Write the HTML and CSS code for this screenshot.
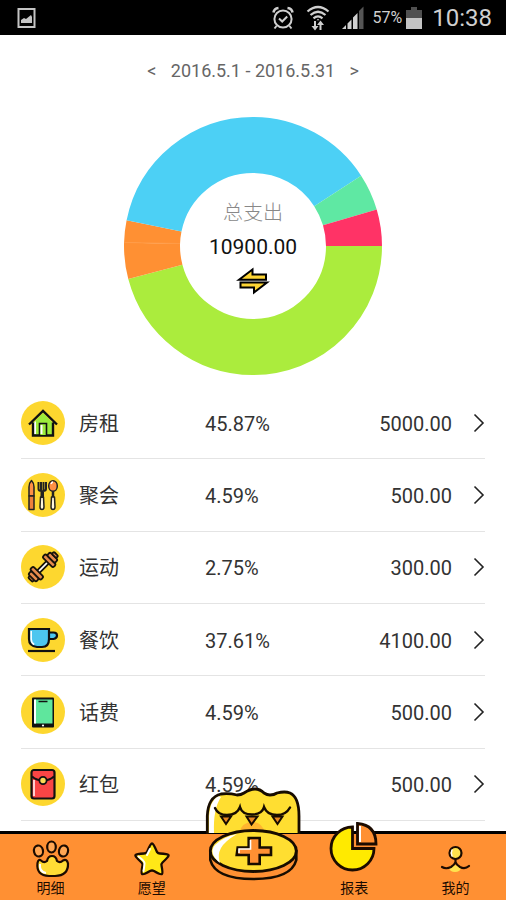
FILE: index.html
```html
<!DOCTYPE html>
<html lang="zh-CN">
<head>
<meta charset="utf-8">
<meta name="viewport" content="width=device-width, initial-scale=1">
<title>报表</title>
<link rel="stylesheet" href="styles.css">
</head>
<body>
<div class="app">
  <header class="status">
    <svg class="status-photo" width="20" height="22" viewBox="0 0 20 22" aria-hidden="true"><path d="M1.5 2h16v18h-16z" fill="none" stroke="#c4c4c4" stroke-width="2"/><path d="M4 16v-3l3-2 2 1 5-4 1 2v6z" fill="#c4c4c4"/></svg>
    <div class="status-right">
      <svg width="22" height="24" viewBox="0 0 22 24" fill="none" stroke="#cfcfcf" aria-hidden="true"><circle cx="11" cy="13" r="8.6" stroke-width="2"/><path d="M7 12.5l3.2 3 5-5" stroke-width="2"/><path d="M1.5 6.5Q2 2.5 6.5 2M20.500 6.500Q20 2.500 15.500 2" stroke-width="2.600"/><path d="M4.500 20l-2 2.500M17.500 20l2 2.500" stroke-width="2"/></svg>
      <svg class="status-wifi" width="24" height="26" viewBox="0 0 24 26" fill="none" stroke="#cfcfcf" aria-hidden="true"><path d="M1.500 6.500Q12-2.500 22.500 6.500M4.500 10Q12 3.500 19.500 10M7.500 13.300Q12 9.500 16.500 13.300" stroke-width="2.200"/><path d="M9 16v7M14.500 25v-7" stroke-width="2"/><path d="M5.500 21h7L9 25.500zM11 20h7l-3.500-4.500zM10.500 15.200l1.500-1.500 1.500 1.500z" fill="#cfcfcf" stroke="none"/></svg>
      <svg class="status-signal" width="24" height="24" viewBox="0 0 24 24" aria-hidden="true"><path d="M1 23l4-4v4zM6.500 17.500l4-4V23h-4zM12 11.500l4.500-4.500v16H12z" fill="#d0d0d0"/><path d="M18 5l4.500-4.500V23H18z" fill="#555"/></svg>
      <span class="battery-text">57%</span>
      <svg width="16" height="24" viewBox="0 0 16 24" aria-hidden="true"><path d="M0 4h5V1h6v3h5v9H0z" fill="#505050"/><path d="M0 12h16v11H0z" fill="#c4c4c4"/></svg>
      <time class="clock">10:38</time>
    </div>
  </header>

  <main class="report">
    <div class="period">
      <button type="button" class="period-step" aria-label="上个月">&lt;</button>
      <span>2016.5.1 - 2016.5.31</span>
      <button type="button" class="period-step" aria-label="下个月">&gt;</button>
    </div>

    <section class="chart">
      <svg class="donut" viewBox="0 0 258 258" fill="none" stroke-width="56" aria-hidden="true">
        <circle cx="129" cy="129" r="101" pathLength="10000" stroke="#abec3d" stroke-dasharray="4587 5413"/>
        <circle cx="129" cy="129" r="101" pathLength="10000" stroke="#ff9033" stroke-dasharray="459 9541" stroke-dashoffset="-4587"/>
        <circle cx="129" cy="129" r="101" pathLength="10000" stroke="#ff9033" stroke-dasharray="275 9725" stroke-dashoffset="-5046"/>
        <circle cx="129" cy="129" r="101" pathLength="10000" stroke="#4cd0f5" stroke-dasharray="3761 6239" stroke-dashoffset="-5321"/>
        <circle cx="129" cy="129" r="101" pathLength="10000" stroke="#5fe8a3" stroke-dasharray="459 9541" stroke-dashoffset="-9082"/>
        <circle cx="129" cy="129" r="101" pathLength="10000" stroke="#ff3366" stroke-dasharray="459 9541" stroke-dashoffset="-9541"/>
        <path d="M0 125.500l56 1" stroke="#ff9b46" stroke-width="1"/>
      </svg>
      <div class="summary">
        <span class="summary-label">总支出</span>
        <strong class="summary-total">10900.00</strong>
        <button type="button" class="swap" aria-label="切换收支">
          <svg width="34" height="24" viewBox="0 2 34 24" overflow="visible" fill="#fdd535" stroke="#000" stroke-width="2" aria-hidden="true"><path d="M3 12.800L16.500 2.500v5h13.500v5.300zM31 15.500H4.500v5H18v5z"/></svg>
        </button>
      </div>
    </section>

    <ul class="list">
      <li><a class="row" href="#rent">
        <svg class="badge" viewBox="0 0 44 44" aria-hidden="true"><circle cx="22" cy="22" r="22" fill="#fdd72f"/><path d="M12 22L22 12l10 10v12.500H12z" fill="#9cec3c"/><path d="M13 22v11h2V20z" fill="#fff"/><path d="M12 21.500v13h20v-13M8 23.500L22 10l14 13.500" fill="none" stroke="#111" stroke-width="2.400"/><path d="M18.500 34V22.500h7V34" fill="#9cec3c" stroke="#111" stroke-width="1.600"/><path d="M19.500 24h2v9h-2z" fill="#fff"/></svg>
        <span>房租</span><span>45.87%</span><span class="amount">5000.00</span>
        <svg class="chevron" viewBox="0 0 12 20" aria-hidden="true"><path d="M1.500 1.500L10 10l-8.500 8.500"/></svg>
      </a></li>
      <li><a class="row" href="#party">
        <svg class="badge" viewBox="0 0 44 44" stroke="#222" stroke-width="1.500" stroke-linejoin="round" aria-hidden="true"><circle cx="22" cy="22" r="22" fill="#fdd72f" stroke="none"/><path d="M8 23V14q0-4 2.500-6.500Q13 10 13 14v9z" fill="#ff9045"/><path d="M8 23h5v13.500H8z" fill="#ee803b"/><path d="M19.500 24h3l.5 10q0 2.500-2 2.500T19 34zM30.500 24h3l.5 10q0 2.500-2 2.500T30 34z" fill="#fff6d9"/><path d="M17.500 9v7q0 2 3 2v6h1.500v-6q3 0 3-2V9M20 9v8M22.500 9v8" fill="none" stroke-width="2"/><path d="M32 18v6" stroke-width="2.500"/><ellipse cx="32" cy="13" rx="4.300" ry="5.300" fill="#ff9045"/><path d="M30 11q1-2 2-2" stroke="#fff" fill="none"/></svg>
        <span>聚会</span><span>4.59%</span><span class="amount">500.00</span>
        <svg class="chevron" viewBox="0 0 12 20" aria-hidden="true"><path d="M1.500 1.500L10 10l-8.500 8.500"/></svg>
      </a></li>
      <li><a class="row" href="#sport">
        <svg class="badge" viewBox="0 0 44 44" aria-hidden="true"><circle cx="22" cy="22" r="22" fill="#fdd72f"/><g transform="rotate(-45 22 22)" stroke="#17130b" stroke-width="1.800" fill="#e88b4d"><path d="M15 20.300h14v3.400H15z" fill="#fff"/><rect x="4" y="19" width="3" height="6" rx="1"/><rect x="6.500" y="16.500" width="4.500" height="11" rx="1.800"/><rect x="11" y="14.500" width="4.500" height="15" rx="1.800"/><rect x="28.500" y="14.500" width="4.500" height="15" rx="1.800"/><rect x="33" y="16.500" width="4.500" height="11" rx="1.800"/><rect x="37.500" y="19" width="3" height="6" rx="1"/></g></svg>
        <span>运动</span><span>2.75%</span><span class="amount">300.00</span>
        <svg class="chevron" viewBox="0 0 12 20" aria-hidden="true"><path d="M1.500 1.500L10 10l-8.500 8.500"/></svg>
      </a></li>
      <li><a class="row" href="#food">
        <svg class="badge" viewBox="0 0 44 44" stroke="#111" stroke-width="2.200" aria-hidden="true"><circle cx="22" cy="22" r="22" fill="#fdd72f" stroke="none"/><path d="M27 14.500h5.500q3.500 0 3.500 3t-3.500 3.500H28" fill="#4cc6ef"/><path d="M8 11h20v10q0 8-7 8h-5q-8-1-8-8z" fill="#4cc6ef"/><path d="M10.200 13v8q0 4 3 5.500" fill="none" stroke="#fff" stroke-width="1.500"/><path d="M7 33h27"/></svg>
        <span>餐饮</span><span>37.61%</span><span class="amount">4100.00</span>
        <svg class="chevron" viewBox="0 0 12 20" aria-hidden="true"><path d="M1.500 1.500L10 10l-8.500 8.500"/></svg>
      </a></li>
      <li><a class="row" href="#phone">
        <svg class="badge" viewBox="0 0 44 44" aria-hidden="true"><circle cx="22" cy="22" r="22" fill="#fdd72f"/><rect x="11" y="7.500" width="22" height="30" rx="1" fill="#111"/><path d="M13.500 9.500h18v24h-18z" fill="#5fe69d"/><path d="M13 9.500h2v24h-2z" fill="#fff"/><path d="M17.500 11.500h9" stroke="#111" stroke-width="1.500"/><circle cx="22" cy="35.500" r="1.100" fill="#fff"/></svg>
        <span>话费</span><span>4.59%</span><span class="amount">500.00</span>
        <svg class="chevron" viewBox="0 0 12 20" aria-hidden="true"><path d="M1.500 1.500L10 10l-8.500 8.500"/></svg>
      </a></li>
      <li><a class="row" href="#red-packet">
        <svg class="badge" viewBox="0 0 44 44" stroke="#111" stroke-width="2.200" aria-hidden="true"><circle cx="22" cy="22" r="22" fill="#fdd72f" stroke="none"/><rect x="10.500" y="8" width="23" height="28.500" rx="2.500" fill="#f94545"/><path d="M13 18v16" stroke="#fff" stroke-width="1.500"/><path d="M11 14.500q4.500 4 11 4t11-4" fill="none"/><circle cx="22" cy="18.500" r="3.600" fill="#fbd956" stroke-width="1.800"/></svg>
        <span>红包</span><span>4.59%</span><span class="amount">500.00</span>
        <svg class="chevron" viewBox="0 0 12 20" aria-hidden="true"><path d="M1.500 1.500L10 10l-8.500 8.500"/></svg>
      </a></li>
    </ul>
  </main>

  <nav class="tabs">
    <a class="tab" href="#detail">
      <svg class="tab-icon" viewBox="0 0 56 44" fill="#ffa653" stroke="#1b0b00" stroke-width="2.200" aria-hidden="true"><ellipse cx="15.500" cy="17" rx="4.500" ry="5.500" transform="rotate(-12 15.500 17)"/><ellipse cx="28.500" cy="13" rx="4.300" ry="5.500"/><ellipse cx="40.500" cy="17" rx="4.500" ry="5.500" transform="rotate(15 40.500 17)"/><path d="M18 26.500q3 3 6 .5 1-5 5-5t5 5q3 2.500 6-.5 4-2 5 3 .5 12-13 12.500h-6q-13-.5-11.500-13 1-4.500 3.500-2.500z" fill="#ffdc35"/><path d="M17 30q-1 8 6 9" fill="none" stroke="#fff" stroke-width="2"/></svg>
      <span>明细</span>
    </a>
    <a class="tab" href="#wish">
      <svg class="tab-icon" viewBox="0 0 56 44" stroke-linejoin="round" stroke-linecap="round" aria-hidden="true"><path d="M28 9.500q1.500 0 5 8.500 1 1.500 3 1.500 7.500.5 8.500 1.500t-6 7.500q-1.500 1.500-1 3 1.500 7.500.5 8.500-1.500 1-8-3-2-1-4 0-6.500 4-8 3-1-1 .5-8.500.5-1.500-1-3Q10.500 22 11.500 21t8.500-1.500q2 0 3-1.500 3.500-8.500 5-8.500z" fill="#ffe817" stroke="#1b0b00" stroke-width="2.300"/><path d="M14.500 22.500q6 4.500 6 6.500 0 2-1 8M23 21l3-6" fill="none" stroke="#fff" stroke-width="2"/></svg>
      <span>愿望</span>
    </a>
    <div class="tab">
      <button type="button" class="add" aria-label="记一笔">
        <svg viewBox="0 0 100 98" aria-hidden="true">
          <path d="M4.300 46V29Q5 10 18 7q8-1 16 1 4 0 7-2 6-4 11-4t9 4q3 2 6 2 4 0 7-2 8-2 13 0 9 4 9 23v17z" fill="#ffde31"/>
          <path d="M6 46V29Q7 14 15 9l3 1q-8 12-7 36z" fill="#fff"/>
          <path d="M36 46q3-11 13-11t13 11z" fill="#ffb52f"/>
          <path d="M4.300 47V29Q5 10 18 7q8-1 16 1 4 0 7-2 6-4 11-4t9 4q3 2 6 2 4 0 7-2 8-2 13 0 9 4 9 23v18" fill="none" stroke="#170c00" stroke-width="2.800"/>
          <path d="M18 29.500h10L23 37zM43.500 29.500h11l-6 8zM69.500 29.500h10l-5 7.500z" fill="#e78723" stroke="#170c00" stroke-width="2"/>
          <path d="M12 21q3 7 12 7 10 0 13-8 2 7.500 12 7.500T61 20q3 8 13 8 9 0 13-7.500" fill="none" stroke="#170c00" stroke-width="2.400" stroke-linecap="round"/>
          <path d="M7.300 64v9q5 19 43 19t43-19v-9z" fill="#ff9033" stroke="#170c00" stroke-width="2.600"/>
          <ellipse cx="50.300" cy="64" rx="43" ry="20.500" fill="#ffde31" stroke="#170c00" stroke-width="2.800"/>
          <path d="M17 76Q5 66 12 58q8-8 22-11-12 7-16 14-4 7-1 15z" fill="#fff"/>
          <path d="M45.700 51h11v9.500H68V68H56.700v9h-11v-9h-12l1-7.500h11z" fill="#ff9033" stroke="#170c00" stroke-width="2.600"/>
          <path d="M47.500 53v9H36v4" fill="none" stroke="#fff" stroke-width="1.600"/>
        </svg>
      </button>
    </div>
    <a class="tab" href="#report" aria-current="page">
      <svg class="tab-icon" viewBox="0 0 56 44" stroke="#1b0b00" stroke-width="2.800" aria-hidden="true"><path d="M26.500-7A21.500 21.500 0 1 0 48 14.500H26.500z" fill="#ffea00"/><path d="M31.500-10.500V10H50Q50-9 31.500-10.500z" fill="#ff9033"/><path d="M34-8V8" stroke="#fff" stroke-width="2"/></svg>
      <span>报表</span>
    </a>
    <a class="tab" href="#me">
      <svg class="tab-icon" viewBox="0 0 56 44" fill="none" stroke="#1b0b00" stroke-width="2.200" stroke-linecap="round" aria-hidden="true"><path d="M22 34l6-3 6 3q-1 4-6 4t-6-4z" fill="#ffe34e" stroke="none"/><circle cx="28.500" cy="19" r="6" fill="#ffe34e"/><path d="M25 16q-1.500 3 0 6" stroke="#fff" stroke-width="1.500"/><path d="M28.500 25.500v2.500q-1 3-4.500 5-5 2.500-9 0M28.500 28q1 3 4.500 5 5 2.500 9-1"/></svg>
      <span>我的</span>
    </a>
  </nav>
</div>
</body>
</html>
```
FILE: styles.css
```css
* {
  box-sizing: border-box;
}

body {
  margin: 0;
  background: #fff;
  color: #333;
  font-family: Roboto, "Noto Sans CJK SC", sans-serif;
  font-size: 20px;
  line-height: 24px;
}

button {
  border: 0;
  padding: 0;
  background: none;
  color: inherit;
  font: inherit;
}

a {
  color: inherit;
  text-decoration: none;
}

svg {
  display: block;
}

.app {
  display: flex;
  flex-direction: column;
  min-height: 100vh;
}

.status {
  display: flex;
  align-items: center;
  justify-content: space-between;
  height: 35px;
  padding: 0 14px 0 17px;
  background: #000;
  color: #cfcfcf;
}

.status-right {
  display: flex;
  align-items: center;
}

.status-wifi {
  margin-left: 12px;
}

.status-signal {
  margin-left: 11px;
}

.battery-text {
  margin: 0 4px 0 8px;
  font-size: 16px;
}

.clock {
  margin-left: 10px;
  font-size: 24px;
}

.report {
  display: flex;
  flex: 1;
  flex-direction: column;
}

.period {
  display: flex;
  align-items: center;
  justify-content: center;
  gap: 8px;
  height: 72px;
  color: #666;
  font-size: 18px;
}

.period-step {
  width: 22px;
}

.chart {
  display: grid;
  place-items: center;
  padding: 10px 0 12px;
}

.donut,
.summary {
  grid-area: 1 / 1;
}

.donut {
  width: 258px;
}

.summary {
  display: flex;
  flex-direction: column;
  align-items: center;
  gap: 10px;
  padding-top: 2px;
}

.summary-label {
  color: #888;
  font-weight: 300;
}

.summary-total {
  color: #111;
  font-size: 21px;
  font-weight: 400;
}

.list {
  display: grid;
  flex: 1;
  grid-auto-rows: 1fr;
  margin: 0;
  padding: 0 21px 10px;
  list-style: none;
}

.list li {
  display: grid;
  min-height: 72px;
  border-bottom: 1px solid #e4e4e4;
}

.row {
  display: grid;
  grid-template-columns: 58px 126px 1fr 1fr 33px;
  align-items: center;
}

.row span {
  padding-top: 2px;
}

.badge {
  width: 44px;
}

.amount {
  text-align: right;
}

.chevron {
  justify-self: end;
  width: 12px;
  fill: none;
  stroke: #222;
  stroke-width: 1.6;
}

.tabs {
  display: grid;
  grid-template-columns: repeat(5, 1fr);
  border-top: 3px solid #000;
  padding-bottom: 2px;
  background: #ff9033;
  color: #1b0b00;
}

.tab {
  position: relative;
  display: flex;
  flex-direction: column;
  align-items: center;
  font-size: 14px;
  line-height: 20px;
}

.tab-icon {
  width: 56px;
  height: 44px;
  overflow: visible;
}

.add {
  position: absolute;
  bottom: 13px;
  left: 50%;
  width: 100px;
  transform: translateX(-50%);
}
```
